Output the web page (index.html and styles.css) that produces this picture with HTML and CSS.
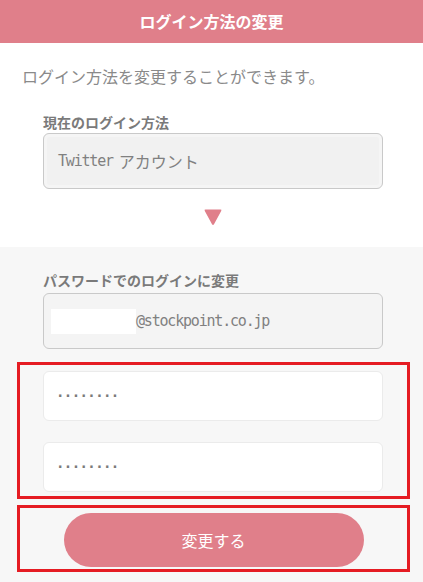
FILE: index.html
```html
<!DOCTYPE html>
<html lang="ja">
<head>
<meta charset="utf-8">
<title>ログイン方法の変更</title>
<link rel="stylesheet" href="styles.css">
</head>
<body>
<header class="header">ログイン方法の変更</header>
<section class="top">
  <p class="intro">ログイン方法を変更することができます。</p>
  <div class="field">
    <div class="label">現在のログイン方法</div>
    <div class="box current"><span class="mono">Twitter</span><span class="kana">アカウント</span></div>
  </div>
  <div class="arrow-row">
    <svg class="arrow" width="18" height="17" viewBox="0 0 18 17"><path d="M1.5 0.5 H16.5 Q18 0.5 17.2 1.9 L10 15.2 Q9 16.8 8 15.2 L0.8 1.9 Q0 0.5 1.5 0.5 Z" fill="#e07f8a"/></svg>
  </div>
</section>
<section class="bottom">
  <div class="field">
    <div class="label label2">パスワードでのログインに変更</div>
    <div class="box email"><span class="mask"></span><span class="mono">@stockpoint.co.jp</span></div>
  </div>
  <div class="frame frame-inputs">
    <div class="input"><span class="dots">········</span></div>
    <div class="input"><span class="dots">········</span></div>
  </div>
  <div class="frame frame-button">
    <button class="submit">変更する</button>
  </div>
</section>
</body>
</html>
```
FILE: styles.css
```css
html, body {
  margin: 0;
  padding: 0;
  background: #f7f7f7;
}
body {
  width: 423px;
  font-family: "Noto Sans CJK JP", "Noto Sans", sans-serif;
  color: #888;
}
.header {
  height: 43px;
  background: #e07f8a;
  color: #fff;
  font-weight: bold;
  font-size: 16px;
  display: flex;
  align-items: center;
  justify-content: center;
  padding-bottom: 2px;
  box-sizing: border-box;
}
.top {
  background: #fff;
  padding-top: 21px;
  padding-bottom: 21px;
}
.intro {
  margin: 0 0 24px 22px;
  font-size: 16px;
  line-height: 24px;
  color: #8a8a8a;
}
.field {
  margin-left: 43px;
  width: 340px;
}
.label {
  font-size: 14px;
  font-weight: bold;
  line-height: 20px;
  color: #7a7a7a;
  margin-bottom: 1px;
}
.label2 {
  margin-bottom: 3px;
}
.box {
  height: 56px;
  box-sizing: border-box;
  border: 1px solid #c9c9c9;
  border-radius: 6px;
  background: #f1f1f1;
  box-shadow: inset 0 0 0 3px #f5f5f5;
  display: flex;
  align-items: center;
  font-size: 16px;
  color: #808080;
}
.current {
  padding-left: 14px;
}
.kana {
  margin-left: 6px;
  font-size: 16px;
}
.mono {
  font-family: "DejaVu Sans Mono", "Liberation Mono", monospace;
  font-size: 15px;
  letter-spacing: -1.2px;
  color: #808080;
}
.email {
  padding-left: 7px;
  background: #f4f4f4;
  box-shadow: none;
}
.mask {
  width: 85px;
  height: 25px;
  background: #fff;
}
.arrow-row {
  display: flex;
  justify-content: center;
  margin-top: 20px;
  padding-left: 2px;
}
.arrow {
  display: block;
}
.bottom {
  padding-top: 23px;
  padding-bottom: 11px;
}
.frame {
  margin-left: 17px;
  width: 393px;
  box-sizing: border-box;
  border: 3px solid #e51c23;
}
.frame-inputs {
  margin-top: 13px;
  padding: 6px 24px 4px 23px;
  display: flex;
  flex-direction: column;
  gap: 21px;
}
.input {
  height: 50px;
  box-sizing: border-box;
  background: #fff;
  border: 1px solid #ebebeb;
  border-radius: 6px;
  display: flex;
  align-items: center;
  padding-left: 12px;
}
.dots {
  font-family: "DejaVu Sans Mono", monospace;
  font-size: 14px;
  letter-spacing: -0.6px;
  color: #7a7a7a;
  font-weight: bold;
}
.frame-button {
  margin-top: 6px;
  padding: 5px 0 2px;
  display: flex;
  justify-content: center;
}
.submit {
  width: 300px;
  height: 54px;
  border: none;
  border-radius: 27px;
  background: #e07f8a;
  color: #fff;
  font-family: "Noto Sans CJK JP", sans-serif;
  font-size: 16px;
  padding: 0;
}
```
